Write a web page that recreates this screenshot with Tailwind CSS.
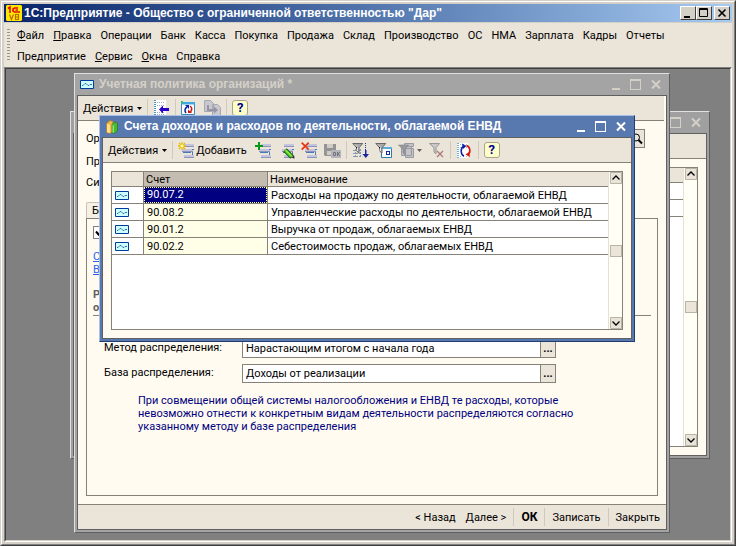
<!DOCTYPE html>
<html lang="ru">
<head>
<meta charset="utf-8">
<title>1С:Предприятие</title>
<script src="https://cdn.jsdelivr.net/npm/@tailwindcss/browser@4"></script>
</head>
<body class="h-screen overflow-hidden font-['Roboto','Liberation_Sans',sans-serif] text-[11px] leading-[13px] text-black">
<svg class="hidden" aria-hidden="true">
  <symbol id="wave" viewBox="0 0 14 9"><path fill="#cff" stroke="#003c9c" d="M.5.5h13v8H.5z"/><path fill="none" stroke="#3a6ea5" d="M2 5.500h1l2-2h1l2 2h1l1-1h2"/></symbol>
  <symbol id="books" viewBox="0 0 12 14"><path fill="#f0b848" stroke="#b87818" stroke-width=".7" d="M.5 3.500 4 .5l3 1v10l-3 2-3.500-1z"/><path fill="#ffe08c" d="M1 4l3 .7V13l-3-.8z"/><path fill="#48b838" stroke="#287818" stroke-width=".7" d="M6 4.500 8.500 2l3 1v8L8 13.500l-2-.7z"/><path fill="#90e070" d="M6.500 5 8 5.500V13l-1.500-.5z"/></symbol>
  <symbol id="rows" viewBox="0 0 17 17"><g shape-rendering="crispEdges"><path fill="#c4c4dc" d="M6 2h10v3H6zM4 7h11v3H4zM6 13h10v3H6z"/><path fill="#8c94bc" d="M6 4h10v1H6zM4 9h11v1H4zM6 15h10v1H6z"/><path fill="#4878b8" d="M5 10h8v1H5zM14 7h2v1h-2zM14 10h1v3h-1z"/></g></symbol>
  <symbol id="add" viewBox="0 0 17 17"><use href="#rows"/><path stroke="#e8b800" stroke-width="1.300" d="M4 0v8M0 4h8M1 1l6 6M7 1 1 7"/><circle cx="4" cy="4" r="1.700" fill="#fffca0"/></symbol>
  <symbol id="addcopy" viewBox="0 0 17 17"><use href="#rows"/><path stroke="#089818" stroke-width="2" d="M4 0v8M0 4h8"/></symbol>
  <symbol id="edit" viewBox="0 0 17 17"><use href="#rows"/><path stroke="#186010" stroke-width="4.600" d="m7 8 7 7"/><path stroke="#40d030" stroke-width="3" d="m7.500 8.500 6 6"/><path stroke="#f8f040" d="m7 7.500 7 7"/><path fill="#222" d="m14 16 2.500.5L16 13z"/></symbol>
  <symbol id="del" viewBox="0 0 17 17"><use href="#rows"/><path stroke="#e83810" stroke-width="1.800" d="m.7.7 7 7m0-7-7 7"/></symbol>
  <symbol id="save" viewBox="0 0 17 17"><path fill="#949494" d="M0 2h12v12H1l-1-1z"/><path fill="#d0ccc4" d="M3 2h6v4H3zM3 9h5v4H3z"/><path fill="#b4b4bc" d="M7 8h10v8H7z"/><path fill="none" stroke="#74747c" d="M9.500 10.500h2v3h-2zM13.500 10v4M16 10l-2 2 2 2"/></symbol>
  <symbol id="funnel" viewBox="0 0 12 12"><path fill="#a8a8a8" stroke="#686868" d="M.7 1.500h10L7 5.800V11L5 9.500V5.800z"/><path stroke="#e4e4e4" d="M3 2.500 5.500 5.500V9"/></symbol>
  <symbol id="fsort" viewBox="0 0 17 17"><path stroke="#8898b0" stroke-dasharray="2 1" d="M1 8.500h9M1 11.500h9M1 14.500h9M3.500 7v9M8.500 7v9"/><use href="#funnel" width="12" height="12"/><path stroke="#203898" stroke-dasharray="1 1" d="M13.500 1v8"/><path fill="#1828a0" d="M13 8h1.500v4H17l-3.200 4L10.500 12H13z"/></symbol>
  <symbol id="fwin" viewBox="0 0 17 17"><path fill="#fff" stroke="#2c7ca8" d="M6.500 5.500h10v10h-10z"/><path fill="#58b0e0" d="M6 5h11v2H6z"/><path fill="#1828a0" d="M11 9h4v4h-4z"/><path fill="#fff" d="M12 10h2v2h-2z"/><use href="#funnel" width="12" height="12"/></symbol>
  <symbol id="fhist" viewBox="0 0 17 17"><path fill="#c4c4c8" stroke="#9a9aa2" d="M6.500 1.500h9v3h-9zM3.500 4.500h10v9h-10zM7.500 6.500h8v9h-8z"/><path fill="#98989e" stroke="#84848a" stroke-width=".6" d="M.5 3h10L7 7.500V13l-2-2V7.500z"/></symbol>
  <symbol id="fclear" viewBox="0 0 17 17"><path fill="#c8c8c8" stroke="#989898" d="M1.500 1.500h10L8 5.800V12l-2-2V5.800z"/><path stroke="#a87878" stroke-width="1.300" d="m9 9 6 6m0-6-6 6"/></symbol>
  <symbol id="refresh" viewBox="0 0 17 17"><path fill="#fff" d="M1 1h11v15H1z"/><path stroke="#70b0d8" stroke-dasharray="1 1" stroke-width="2" d="M2 1v15"/><path stroke="#98c0d8" stroke-dasharray="1 2" d="M4 2.500h8M4 5.500h8M4 14.500h8"/><path fill="none" stroke="#0820a8" stroke-width="1.500" d="M8 14C4.500 12.500 4 6 8 4"/><path fill="#0820a8" d="M6 1.500 10.500 4 7 7z"/><path fill="none" stroke="#d01810" stroke-width="1.500" d="M10.500 3.500c4 1.500 4.500 7 1.500 9.500"/><path fill="#d01810" d="M9.500 12.500 13 10l1 5z"/></symbol>
  <symbol id="goto" viewBox="0 0 17 17"><path fill="#fff" d="M1 0h12v16H1z"/><path stroke="#5098c0" stroke-dasharray="1 1" stroke-width="2" d="M2 0v16"/><path stroke="#98b0c0" stroke-dasharray="1 1" d="M4 2.500h8M4 5.500h8M4 12.500h8M4 14.500h8"/><path fill="#2800c8" d="M6 9.500 10 5.500V8h6v3h-6v2.500z"/></symbol>
  <symbol id="rewin" viewBox="0 0 15 15"><path fill="#fff" stroke="#3888b8" d="M.5 1.500h13v12H.5z"/><path fill="#40a8e0" d="M0 1h14v2.500H0z"/><path fill="#30c848" d="M0 0h2v2H0z"/><path fill="none" stroke="#0820a8" stroke-width="1.500" d="M5 12C3.500 10 3.500 7.500 6 6"/><path fill="#0820a8" d="M4 4h4v4z"/><path fill="none" stroke="#d01810" stroke-width="1.500" d="M9 5c2 1.500 2 4 .5 6"/><path fill="#d01810" d="M7 8.500V12h4z"/></symbol>
  <symbol id="docs" viewBox="0 0 17 17"><path fill="#c8c8ce" stroke="#a8a8b2" d="M.5.500h6l3 3v8h-9zM8.500 4.500h5l3 3v8h-8z"/><path fill="#9494a4" d="M3 5h2v4h5V6.500L14 10l-4 3.500V11H3z"/></symbol>
  <symbol id="up" viewBox="0 0 12 12"><path fill="#e9e3d9" stroke="#b9b5a6" d="M.5.500h11v11H.5z"/><path fill="none" stroke="#000" stroke-width="1.300" d="m2.500 7.500 3.500-3.500 3.500 3.500"/></symbol>
  <symbol id="down" viewBox="0 0 12 12"><path fill="#e9e3d9" stroke="#b9b5a6" d="M.5.500h11v11H.5z"/><path fill="none" stroke="#000" stroke-width="1.300" d="M2.500 4.500 6 8l3.500-3.500"/></symbol>
  <symbol id="ctl" viewBox="0 0 51 11"><g fill="none" stroke="currentColor" shape-rendering="crispEdges"><path stroke-width="2" d="M1 10h8"/><path d="M19.500.500h10v10h-10z"/><path stroke-width="2" d="M19 1h11"/></g><path fill="none" stroke="currentColor" stroke-width="2" d="m41 1.500 8 8m0-8-8 8"/></symbol>
  <symbol id="arr" viewBox="0 0 5 3"><path fill="currentColor" d="M0 0h5L2.500 3z"/></symbol>
</svg>

<div class="h-full border border-t-[#d4d0c8] border-l-[#d4d0c8] border-r-[#404040] border-b-[#404040]">
<div class="flex h-full flex-col border border-t-white border-l-white border-r-[#808080] border-b-[#808080] bg-[#d4d0c8] p-[2px]">

  <header class="mb-px flex h-[18px] shrink-0 items-center bg-linear-to-r from-[#0a246a] to-[#a6caf0] pr-[2px] pl-[2px] text-white">
    <svg class="h-4 w-4" viewBox="0 0 16 16"><path fill="#ffe800" d="M1 0h14l1 1v14l-1 1H1l-1-1V1z"/><path fill="none" stroke="#e01010" stroke-width="1.600" d="M2 3.500 4 2v6M12 3H8.500L7 4v2l1.500 1H14M12 5H9.500"/><path fill="none" stroke="#b86800" stroke-width="1.200" d="m3.500 9.500 2 5 2-5M9.500 9.500h3v5h-3zM9.500 12h3"/></svg>
    <h1 class="ml-[2px] flex-1 font-['Liberation_Sans',sans-serif] text-[12px] font-bold whitespace-nowrap">1С:Предприятие - Общество с ограниченной ответственностью "Дар"</h1>
    <div class="flex">
      <button aria-label="Свернуть" class="h-[14px] w-4 border border-t-white border-l-white border-r-[#404040] border-b-[#404040] bg-[#d4d0c8]"><svg class="h-3 w-[14px]" viewBox="0 0 14 12"><path d="M3 9h6v2H3z"/></svg></button>
      <button aria-label="Развернуть" class="h-[14px] w-4 border border-t-white border-l-white border-r-[#404040] border-b-[#404040] bg-[#d4d0c8]"><svg class="h-3 w-[14px]" viewBox="0 0 14 12"><path fill="none" stroke="#000" d="M2.500 1.500h8v8h-8zM2 2.500h9"/></svg></button>
      <button aria-label="Закрыть приложение" class="ml-[2px] h-[14px] w-4 border border-t-white border-l-white border-r-[#404040] border-b-[#404040] bg-[#d4d0c8]"><svg class="h-3 w-[14px]" viewBox="0 0 14 12"><path stroke="#000" stroke-width="1.600" d="m3.500 2.500 7 7m0-7-7 7"/></svg></button>
    </div>
  </header>

  <nav class="flex h-11 shrink-0 bg-[#ebe4d9] pt-[6px] pl-[3px]">
    <span class="mr-[7px] h-8 w-[3px] bg-[repeating-linear-gradient(#9a958b_0_1px,#ebe4d9_1px_3px)]"></span>
    <div>
      <div class="flex h-[21px] gap-[9px] whitespace-nowrap">
        <a href="#"><u>Ф</u>айл</a><a href="#"><u>П</u>равка</a><a href="#">Операции</a><a href="#">Банк</a><a href="#">Касса</a><a href="#">Покупка</a><a href="#">Продажа</a><a href="#">Склад</a><a href="#">Производство</a><a href="#">ОС</a><a href="#">НМА</a><a href="#">Зарплата</a><a href="#">Кадры</a><a href="#">Отчеты</a>
      </div>
      <div class="flex h-[21px] gap-[9px] whitespace-nowrap">
        <a href="#">Предприятие</a><a href="#"><u>С</u>ервис</a><a href="#"><u>О</u>кна</a><a href="#">Сп<u>р</u>авка</a>
      </div>
    </div>
  </nav>

  <div class="min-h-0 flex-1 border border-t-[#808080] border-l-[#808080] border-r-white border-b-white">
  <main class="relative h-full overflow-hidden border border-t-[#404040] border-l-[#404040] border-r-[#d4d0c8] border-b-[#d4d0c8] bg-[#808080]">

    <!-- list window at the back -->
    <section class="absolute top-[42px] right-[20px] bottom-[81px] left-[64px] flex flex-col border border-t-[#e0e0e0] border-l-[#e0e0e0] border-r-[#606060] border-b-[#606060] bg-[#a0a0a0] px-[2px] pb-[2px]">
      <div class="flex h-[21px] shrink-0 items-center justify-end pr-[5px] text-[#d4d0c8]"><svg class="h-[11px] w-[51px]"><use href="#ctl"/></svg></div>
      <div class="flex min-h-0 flex-1 flex-col border border-[#606060] bg-[#fffbf0]">
        <div class="h-[25px] shrink-0 border-b border-[#868278] bg-[#ebe4d9]"></div>
        <div class="m-2 flex min-h-0 flex-1 border border-[#868278] bg-white">
          <div class="flex-1"><div class="h-[15px] border-b border-[#868278] bg-[#ebe4d9]"></div><div class="h-[17px] border-b border-[#868278]"></div><div class="h-[17px] border-b border-[#868278]"></div></div>
          <div class="flex w-[14px] flex-col items-center border-l border-[#e5e0d5] bg-[#fffff5]">
            <svg class="h-3 w-3"><use href="#up"/></svg><span class="mt-[121px] h-3 w-3 border border-[#b9b5a6] bg-[#ebe4d9]"></span><svg class="mt-auto h-3 w-3"><use href="#down"/></svg>
          </div>
        </div>
      </div>
    </section>

    <!-- accounting policy window -->
    <section class="absolute top-[4px] right-[60px] bottom-[7px] left-[68px] flex flex-col border border-t-[#e0e0e0] border-l-[#e0e0e0] border-r-[#606060] border-b-[#606060] bg-[#a4a4a4] px-[2px] pb-[2px]">
      <div class="flex h-[21px] shrink-0 items-center pr-[5px] pl-[3px] text-[#d4d0c8]">
        <svg class="h-[9px] w-[14px]"><use href="#wave"/></svg>
        <h2 class="ml-[5px] flex-1 font-['Liberation_Sans',sans-serif] text-[12px] font-bold whitespace-nowrap">Учетная политика организаций *</h2>
        <svg class="h-[11px] w-[51px]"><use href="#ctl"/></svg>
      </div>
      <div class="flex min-h-0 flex-1 flex-col border border-[#606060] bg-[#fffbf0]">
        <div class="mr-[2px] flex h-[25px] shrink-0 items-center border-b border-[#868278] bg-[#ebe4d9] pl-[5px]">
          <button class="flex items-center gap-1 whitespace-nowrap">Действия<svg class="h-[3px] w-[5px]"><use href="#arr"/></svg></button>
          <span class="mx-[5px] h-[18px] w-px bg-[#cfc8bc]"></span>
          <button aria-label="Перейти"><svg class="h-[17px] w-[17px]"><use href="#goto"/></svg></button>
          <span class="mx-[5px] h-[18px] w-px bg-[#cfc8bc]"></span>
          <button aria-label="Обновить"><svg class="h-[15px] w-[15px]"><use href="#rewin"/></svg></button>
          <button aria-label="Копировать" disabled class="ml-2"><svg class="h-[17px] w-[17px]"><use href="#docs"/></svg></button>
          <span class="mx-[5px] h-[18px] w-px bg-[#cfc8bc]"></span>
          <button class="h-4 w-4 rounded-[3px] border border-[#a8a494] bg-[#ffffc8] text-[13px] leading-[14px] font-bold text-[#000090]">?</button>
        </div>
        <div class="flex min-h-0 flex-1 flex-col px-2 pt-2 pb-2">
          <div class="flex h-[19px] shrink-0 items-center pr-[13px]">
            <label for="org" class="w-[150px]">Ор</label>
            <input id="org" class="h-[19px] min-w-0 flex-1 border border-[#868278] bg-white">
            <button aria-label="Открыть" class="-ml-px grid h-[19px] w-4 place-items-center border border-[#868278] bg-[#ebe4d9]"><svg class="h-3 w-3" viewBox="0 0 12 12"><circle cx="5" cy="4.500" r="3.500" fill="none" stroke="#000"/><path stroke="#000" stroke-width="2" d="m7.500 7 3.500 3.500"/></svg></button>
          </div>
          <div class="mt-[7px] h-[13px] shrink-0">Пр</div>
          <div class="mt-2 h-[13px] shrink-0">Си</div>
          <div class="mt-[13px] h-4 w-20 shrink-0 rounded-t-[2px] border border-b-0 border-[#c8c0b4] bg-[#f5efe4] px-[5px] pt-px">Б</div>
          <div class="flex min-h-0 flex-1 flex-col border border-[#868278] px-[6px] pt-[7px]">
            <div class="grid h-[13px] w-[13px] shrink-0 *:col-start-1 *:row-start-1">
              <input type="checkbox" checked aria-label="ЕНВД" class="h-[13px] w-[13px] appearance-none border border-[#868278] bg-white">
              <svg class="pointer-events-none h-[13px] w-[13px]" viewBox="0 0 13 13"><path fill="none" stroke="#000" stroke-width="2" d="m3 5.500 2.500 3L10 4"/></svg>
            </div>
            <a href="#" class="mt-[11px] self-start text-[#2860f0] underline">С</a>
            <a href="#" class="self-start text-[#2860f0] underline">В</a>
            <h3 class="mt-3 border-b border-[#868278] pb-px font-bold text-[#606060]">Р<br>о</h3>
            <div class="mt-[23px] grid grid-cols-[138px_1fr] items-center gap-y-[6px] pr-[95px] pl-[11px]">
              <label for="method" class="pb-[3px]">Метод распределения:</label>
              <div class="flex h-[19px]"><input id="method" value="Нарастающим итогом с начала года" class="min-w-0 flex-1 border border-[#868278] bg-white px-[3px]"><button aria-label="Выбрать метод" class="-ml-px w-4 border border-[#868278] bg-[#ebe4d9] font-bold">...</button></div>
              <label for="base" class="pb-[3px]">База распределения:</label>
              <div class="flex h-[19px]"><input id="base" value="Доходы от реализации" class="min-w-0 flex-1 border border-[#868278] bg-white px-[3px]"><button aria-label="Выбрать базу" class="-ml-px w-4 border border-[#868278] bg-[#ebe4d9] font-bold">...</button></div>
            </div>
            <p class="mt-[11px] ml-[45px] whitespace-nowrap text-[#000080]">При совмещении общей системы налогообложения и ЕНВД те расходы, которые<br>невозможно отнести к конкретным видам деятельности распределяются согласно<br>указанному методу и базе распределения</p>
          </div>
        </div>
        <div class="flex h-[25px] shrink-0 items-center justify-end border-t border-[#868278] bg-[#ebe4d9] pr-[6px] whitespace-nowrap">
          <button>&lt; Назад</button><button class="ml-[10px]">Далее &gt;</button>
          <span class="mx-[7px] h-[18px] w-px bg-[#cfc8bc]"></span><button class="text-[12px] font-bold">ОК</button>
          <span class="mx-[7px] h-[18px] w-px bg-[#cfc8bc]"></span><button>Записать</button>
          <span class="mx-[7px] h-[18px] w-px bg-[#cfc8bc]"></span><button>Закрыть</button>
        </div>
      </div>
    </section>

    <!-- accounts window in front -->
    <section class="absolute top-[46px] right-[95px] bottom-[198px] left-[93px] flex flex-col border border-t-[#a8c0e8] border-l-[#a8c0e8] border-r-[#203c70] border-b-[#203c70] bg-[#5878b0] px-[2px] pb-[2px]">
      <div class="flex h-[21px] shrink-0 items-center pr-[5px] pl-[4px] text-white">
        <svg class="h-[14px] w-[12px]"><use href="#books"/></svg>
        <h2 class="ml-[6px] flex-1 font-['Liberation_Sans',sans-serif] text-[12px] font-bold whitespace-nowrap">Счета доходов и расходов по деятельности, облагаемой ЕНВД</h2>
        <svg class="h-[11px] w-[51px]"><use href="#ctl"/></svg>
      </div>
      <div class="flex min-h-0 flex-1 flex-col border border-[#606060] bg-[#fffbf0]">
        <div class="flex h-[25px] shrink-0 items-center border-b border-[#868278] bg-[#ebe4d9] pl-[5px]">
          <button class="flex items-center gap-1 whitespace-nowrap">Действия<svg class="h-[3px] w-[5px]"><use href="#arr"/></svg></button>
          <span class="mx-[5px] h-[18px] w-px bg-[#cfc8bc]"></span>
          <button class="flex items-center gap-px"><svg class="h-[17px] w-[17px]"><use href="#add"/></svg><span><u>Д</u>обавить</span></button>
          <div class="ml-2 flex gap-[6px]">
            <button aria-label="Добавить копированием"><svg class="h-[17px] w-[17px]"><use href="#addcopy"/></svg></button>
            <button aria-label="Изменить"><svg class="h-[17px] w-[17px]"><use href="#edit"/></svg></button>
            <button aria-label="Удалить"><svg class="h-[17px] w-[17px]"><use href="#del"/></svg></button>
            <button aria-label="Сохранить" disabled><svg class="h-[17px] w-[17px]"><use href="#save"/></svg></button>
          </div>
          <span class="mx-[5px] h-[18px] w-px bg-[#cfc8bc]"></span>
          <div class="flex gap-[6px]">
            <button aria-label="Отбор и сортировка"><svg class="h-[17px] w-[17px]"><use href="#fsort"/></svg></button>
            <button aria-label="Отбор по значению"><svg class="h-[17px] w-[17px]"><use href="#fwin"/></svg></button>
            <button aria-label="История отборов" class="flex items-center gap-[2px] text-[#606060]"><svg class="h-[17px] w-[17px]"><use href="#fhist"/></svg><svg class="h-[3px] w-[5px]"><use href="#arr"/></svg></button>
            <button aria-label="Отключить отбор" disabled><svg class="h-[17px] w-[17px]"><use href="#fclear"/></svg></button>
          </div>
          <span class="mx-[5px] h-[18px] w-px bg-[#cfc8bc]"></span>
          <button aria-label="Обновить список"><svg class="h-[17px] w-[17px]"><use href="#refresh"/></svg></button>
          <span class="mx-[5px] h-[18px] w-px bg-[#cfc8bc]"></span>
          <button class="h-4 w-4 rounded-[3px] border border-[#a8a494] bg-[#ffffc8] text-[13px] leading-[14px] font-bold text-[#000090]">?</button>
        </div>
        <div class="m-2 flex min-h-0 flex-1 border border-[#868278] bg-white">
          <div class="flex-1">
            <table class="w-full table-fixed border-separate border-spacing-0 text-left whitespace-nowrap">
              <colgroup><col class="w-8"><col class="w-[124px]"><col></colgroup>
              <thead><tr class="h-[15px] *:border-b *:border-[#868278] *:p-0 *:font-normal"><th class="border-r bg-[#ebe4d9]"></th><th class="border-r bg-[#c4bcb0]"><div class="pl-[2px]">Счет</div></th><th class="bg-[#ebe4d9]"><div class="pl-[2px]">Наименование</div></th></tr></thead>
              <tbody class="*:h-[17px] *:*:border-b *:*:border-[#868278] *:*:p-0">
                <tr><td class="border-r"><svg class="ml-[3px] h-[9px] w-[14px]"><use href="#wave"/></svg></td><td class="border-r"><div class="h-4 border border-dotted border-[#ffff80] bg-[#000080] pl-[2px] leading-[14px] text-white">90.07.2</div></td><td><div class="pl-[3px]">Расходы на продажу по деятельности, облагаемой ЕНВД</div></td></tr>
                <tr><td class="border-r"><svg class="ml-[3px] h-[9px] w-[14px]"><use href="#wave"/></svg></td><td class="border-r bg-[#ffffe8]"><div class="pl-[3px]">90.08.2</div></td><td><div class="pl-[3px]">Управленческие расходы по деятельности, облагаемой ЕНВД</div></td></tr>
                <tr><td class="border-r"><svg class="ml-[3px] h-[9px] w-[14px]"><use href="#wave"/></svg></td><td class="border-r bg-[#ffffe8]"><div class="pl-[3px]">90.01.2</div></td><td><div class="pl-[3px]">Выручка от продаж, облагаемых ЕНВД</div></td></tr>
                <tr><td class="border-r"><svg class="ml-[3px] h-[9px] w-[14px]"><use href="#wave"/></svg></td><td class="border-r bg-[#ffffe8]"><div class="pl-[3px]">90.02.2</div></td><td><div class="pl-[3px]">Себестоимость продаж, облагаемых ЕНВД</div></td></tr>
              </tbody>
            </table>
          </div>
          <div class="flex w-[14px] flex-col items-center border-l border-[#e5e0d5] bg-[#fffff5]">
            <svg class="h-3 w-3"><use href="#up"/></svg><span class="mt-[61px] h-3 w-3 border border-[#b9b5a6] bg-[#ebe4d9]"></span><svg class="mt-auto h-3 w-3"><use href="#down"/></svg>
          </div>
        </div>
      </div>
    </section>
  </main>
  </div>
</div>
</div>
</body>
</html>
